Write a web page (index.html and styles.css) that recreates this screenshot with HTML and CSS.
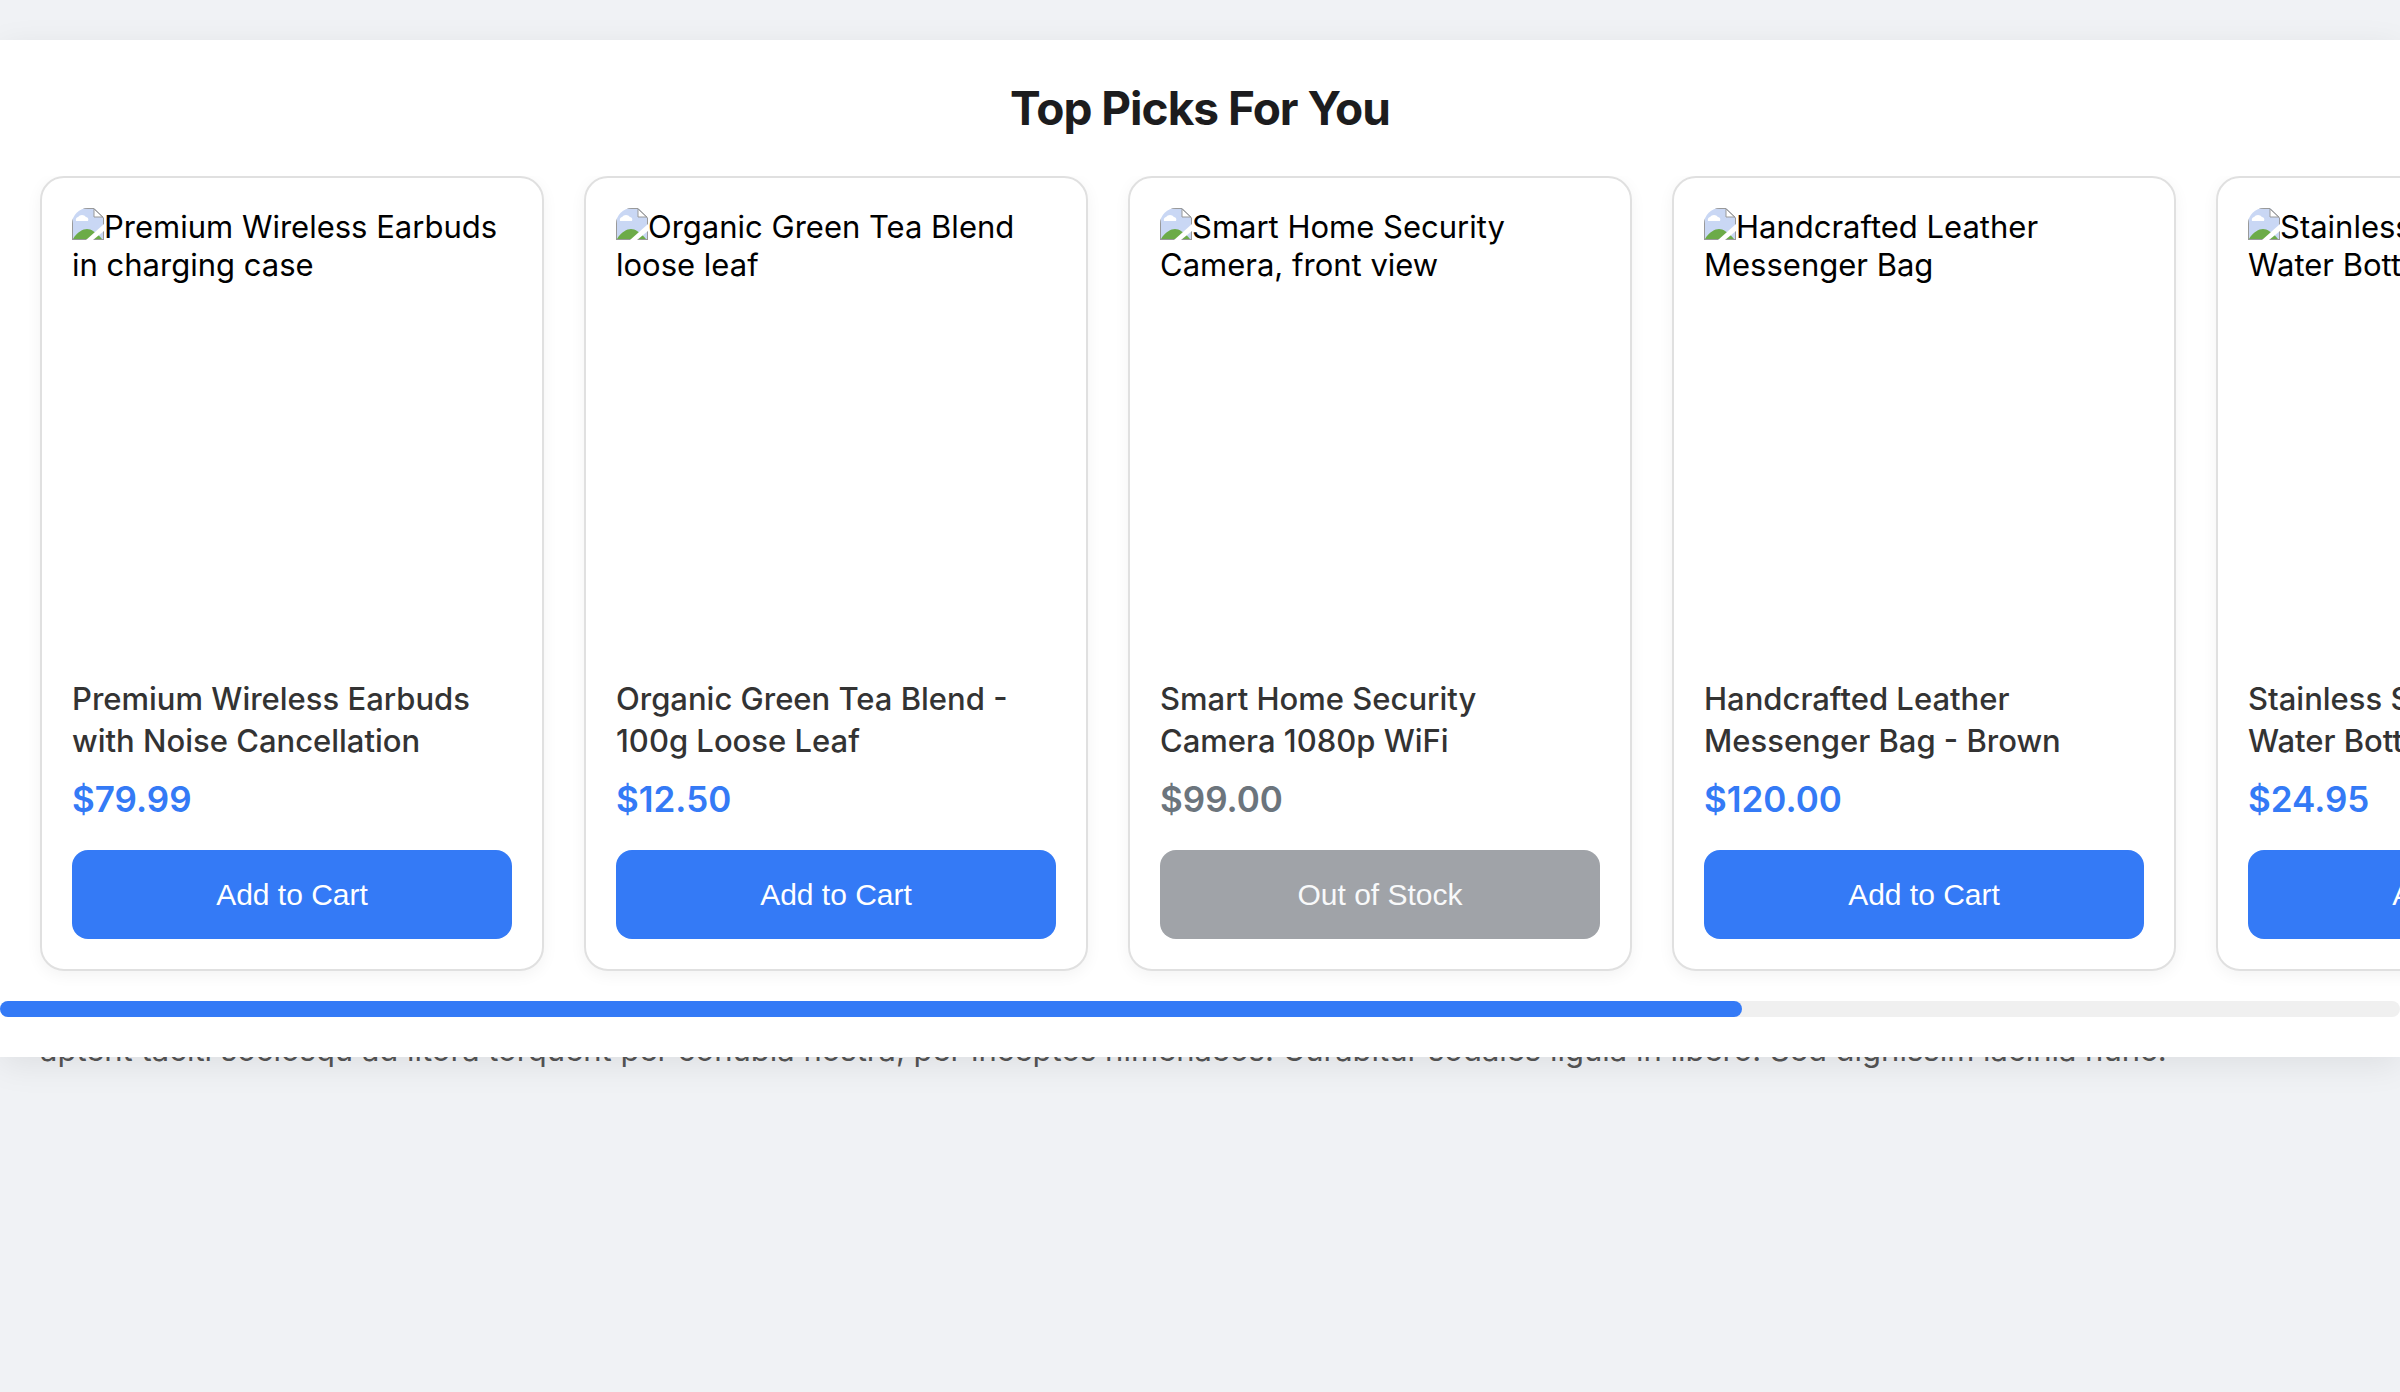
FILE: index.html
```html
<!DOCTYPE html>
<html lang="en">
<head>
<meta charset="utf-8">
<meta name="viewport" content="width=device-width, initial-scale=1">
<title>Top Picks For You</title>
<link rel="stylesheet" href="styles.css">
</head>
<body>
<svg width="0" height="0" class="defs" aria-hidden="true">
  <symbol id="picture" viewBox="0 0 32 32">
    <path d="M0 0H22L32 10V32H0Z" fill="#c9d7f4"/>
    <path d="M4 13a3 3 0 0 1 2-4 5 5 0 0 1 8 0 3 3 0 0 1 2 4Z" fill="#fff"/>
    <path d="M1 31C5 24 11 21 15 21s9 3 15 10Z" fill="#6cab48"/>
    <path d="M22 1V9H31Z" fill="#fff" stroke="#999"/>
    <path d="M0.5 32V0.5H22L31.5 10V32M0 31.5H32" fill="none" stroke="#999"/>
    <path d="M32 16V23L21 32H14Z" fill="#fff"/>
  </symbol>
</svg>
<main>
  <section class="picks" aria-labelledby="picks-title">
    <h2 class="picks-title" id="picks-title">Top Picks For You</h2>
    <div class="carousel">
      <article class="card">
        <div class="photo"><svg class="photo-icon" aria-hidden="true"><use href="#picture"/></svg>Premium Wireless Earbuds in charging case</div>
        <h3 class="name">Premium Wireless Earbuds with Noise Cancellation</h3>
        <p class="price">$79.99</p>
        <button class="buy" type="button">Add to Cart</button>
      </article>
      <article class="card">
        <div class="photo"><svg class="photo-icon" aria-hidden="true"><use href="#picture"/></svg>Organic Green Tea Blend loose leaf</div>
        <h3 class="name">Organic Green Tea Blend - 100g Loose Leaf</h3>
        <p class="price">$12.50</p>
        <button class="buy" type="button">Add to Cart</button>
      </article>
      <article class="card sold-out">
        <div class="photo"><svg class="photo-icon" aria-hidden="true"><use href="#picture"/></svg>Smart Home Security Camera, front view</div>
        <h3 class="name">Smart Home Security Camera 1080p WiFi</h3>
        <p class="price">$99.00</p>
        <button class="buy" type="button" disabled>Out of Stock</button>
      </article>
      <article class="card">
        <div class="photo"><svg class="photo-icon" aria-hidden="true"><use href="#picture"/></svg>Handcrafted Leather Messenger Bag</div>
        <h3 class="name">Handcrafted Leather Messenger Bag - Brown</h3>
        <p class="price">$120.00</p>
        <button class="buy" type="button">Add to Cart</button>
      </article>
      <article class="card">
        <div class="photo"><svg class="photo-icon" aria-hidden="true"><use href="#picture"/></svg>Stainless Steel Insulated Water Bottle</div>
        <h3 class="name">Stainless Steel Insulated Water Bottle</h3>
        <p class="price">$24.95</p>
        <button class="buy" type="button">Add to Cart</button>
      </article>
      <article class="card">
        <div class="photo"><svg class="photo-icon" aria-hidden="true"><use href="#picture"/></svg>Ceramic Coffee Mug Set</div>
        <h3 class="name">Ceramic Coffee Mug Set of Four</h3>
        <p class="price">$34.00</p>
        <button class="buy" type="button">Add to Cart</button>
      </article>
    </div>
    <div class="track" aria-hidden="true"><div class="thumb" style="width: 72.6%"></div></div>
  </section>
  <p class="copy">aptent taciti sociosqu ad litora torquent per conubia nostra, per inceptos himenaeos. Curabitur sodales ligula in libero. Sed dignissim lacinia nunc.</p>
</main>
</body>
</html>
```
FILE: styles.css
```css
* { box-sizing: border-box; }

body {
  margin: 0;
  min-height: 100vh;
  padding-top: 40px;
  background: #f0f2f5;
  font-family: Inter, "Liberation Sans", sans-serif;
  font-size: 31px;
  color: #000;
}

h2, h3, p { margin: 0; }

.defs { display: block; }

.picks {
  position: relative;
  z-index: 1;
  padding: 38px 0 40px;
  background: #fff;
  box-shadow: 0 8px 32px rgba(0, 0, 0, 0.08);
}

.picks-title {
  margin-bottom: 38px;
  font-size: 46px;
  font-weight: 700;
  line-height: 60px;
  letter-spacing: -1px;
  text-align: center;
  color: #1c1c1e;
}

.carousel {
  display: flex;
  gap: 40px;
  padding: 0 40px 30px;
  overflow-x: auto;
  scrollbar-width: none;
}

.track {
  height: 16px;
  border-radius: 8px;
  background: #f0f0f0;
}

.thumb {
  height: 100%;
  border-radius: 8px;
  background: #347af6;
}

.card {
  flex: 0 0 504px;
  padding: 30px;
  border: 2px solid #e0e0e0;
  border-radius: 24px;
  background: #fff;
  box-shadow: 0 4px 16px rgba(0, 0, 0, 0.05);
}

.photo {
  height: 440px;
  margin-bottom: 30px;
  border-radius: 16px;
  line-height: 38px;
  overflow: hidden;
}

.photo-icon {
  width: 32px;
  height: 32px;
  vertical-align: top;
}

.name {
  margin-bottom: 15px;
  font-size: 31px;
  font-weight: 500;
  line-height: 42px;
  color: #333;
}

.price {
  margin-bottom: 29px;
  font-size: 35px;
  font-weight: 600;
  line-height: 44px;
  color: #347af6;
}

.buy {
  display: block;
  width: 100%;
  padding: 27px;
  border: 0;
  border-radius: 16px;
  background: #347af6;
  color: #fff;
  font: 30px/35px "Liberation Sans", Arial, sans-serif;
  cursor: pointer;
}

.sold-out .price { color: #6c757d; }
.sold-out .buy { background: #a0a3a8; color: #f8f9fa; cursor: default; }

.copy {
  margin-top: -33px;
  padding: 0 40px;
  line-height: 51px;
  color: #555;
}
```
